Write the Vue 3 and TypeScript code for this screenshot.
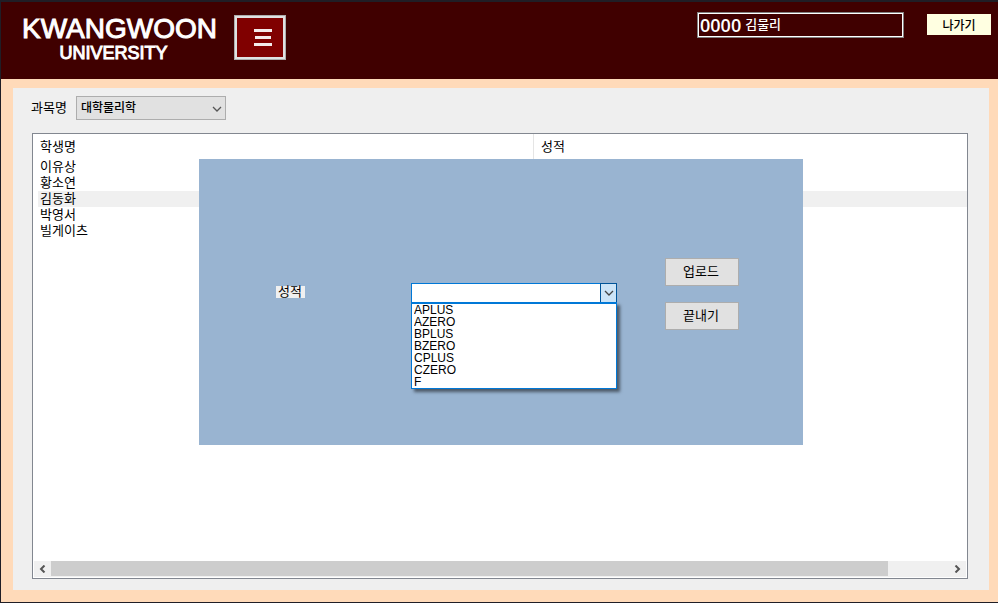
<script setup lang="ts">
import { ref } from 'vue'

interface Student {
  name: string
  score: string
}

const userId = '0000'
const userName = '김물리'

const subjects: string[] = ['대학물리학']
const subject = ref(subjects[0])

const students: Student[] = [
  { name: '이유상', score: '' },
  { name: '황소연', score: '' },
  { name: '김동화', score: '' },
  { name: '박영서', score: '' },
  { name: '빌게이츠', score: '' },
]
const selected = ref(2)

const grades: string[] = ['APLUS', 'AZERO', 'BPLUS', 'BZERO', 'CPLUS', 'CZERO', 'F']
const grade = ref('')
</script>

<template>
  <div class="window">
    <header class="header">
      <h1 class="brand">
        <span class="brand-name">KWANGWOON</span>
        <span class="brand-sub">UNIVERSITY</span>
      </h1>
      <button class="menu" type="button" aria-label="메뉴">
        <svg width="18" height="17" viewBox="0 0 18 17">
          <path d="M0 0h18v3H0zM1 7h16v3H1zM0 14h18v3H0z" fill="#f4eaea" />
        </svg>
      </button>
      <div class="user">
        <span class="user-id">{{ userId }}</span>
        <span class="user-name">{{ userName }}</span>
      </div>
      <button class="exit" type="button">나가기</button>
    </header>

    <main class="body">
      <section class="panel">
        <div class="toolbar">
          <label for="subject">과목명</label>
          <div class="subject">
            <select id="subject" v-model="subject">
              <option v-for="s in subjects" :key="s">{{ s }}</option>
            </select>
            <svg class="chevron" width="10" height="6" viewBox="0 0 10 6">
              <path d="M1 1l4 4l4 -4" fill="none" stroke="#555" stroke-width="1.3" />
            </svg>
          </div>
        </div>

        <div class="list">
          <table class="students">
            <thead>
              <tr>
                <th class="name-col">학생명</th>
                <th>성적</th>
              </tr>
            </thead>
            <tbody>
              <tr
                v-for="(student, i) in students"
                :key="student.name"
                :class="{ selected: i === selected }"
                @click="selected = i"
              >
                <td>{{ student.name }}</td>
                <td>{{ student.score }}</td>
              </tr>
            </tbody>
          </table>

          <div class="scrollbar">
            <button type="button" class="scroll-btn" aria-label="왼쪽">
              <svg width="7" height="8" viewBox="0 0 7 8">
                <path d="M5.5 .5L2 4l3.500 3.500" fill="none" stroke="#555" stroke-width="2" />
              </svg>
            </button>
            <div class="track"><div class="thumb"></div></div>
            <button type="button" class="scroll-btn" aria-label="오른쪽">
              <svg width="7" height="8" viewBox="0 0 7 8">
                <path d="M1.500 .5L5 4l-3.500 3.500" fill="none" stroke="#555" stroke-width="2" />
              </svg>
            </button>
          </div>

          <div class="dialog">
            <div class="label-cell">
              <label class="grade-label" for="grade">성적</label>
            </div>
            <div class="combo">
              <select id="grade" v-model="grade">
                <option value=""></option>
                <option v-for="g in grades" :key="g">{{ g }}</option>
              </select>
              <span class="combo-arrow">
                <svg width="10" height="6" viewBox="0 0 10 6">
                  <path d="M1 1l4 4l4 -4" fill="none" stroke="#444" stroke-width="1.3" />
                </svg>
              </span>
              <ul class="options" role="listbox">
                <li
                  v-for="g in grades"
                  :key="g"
                  role="option"
                  :aria-selected="g === grade"
                  @click="grade = g"
                >
                  {{ g }}
                </li>
              </ul>
            </div>
            <div class="actions">
              <button type="button">업로드</button>
              <button type="button">끝내기</button>
            </div>
          </div>
        </div>
      </section>
    </main>
  </div>
</template>

<style>
html,
body {
  margin: 0;
  background: #1e1e1e;
}
</style>

<style scoped>
.window {
  box-sizing: border-box;
  min-height: 100vh;
  display: flex;
  flex-direction: column;
  padding: 2px 0 1px 1px;
  background: #201e26;
  font-family: 'Liberation Sans', 'Noto Sans CJK KR', sans-serif;
  font-size: 13px;
  line-height: 16px;
  color: #000;
}

button,
select {
  font: inherit;
  color: inherit;
  margin: 0;
  border-radius: 0;
}

.header {
  display: flex;
  align-items: flex-start;
  height: 77px;
  padding: 0 7px 0 20px;
  background: #400000;
  color: #fff;
}

.brand {
  display: flex;
  flex-direction: column;
  align-items: center;
  width: 197px;
  margin: 13px 16px 0 0;
  font-weight: 400;
  text-align: center;
  -webkit-text-stroke: 1px #fff;
}

.brand-name {
  font-size: 28px;
  line-height: 28px;
}

.brand-sub {
  padding-right: 12px;
  font-size: 18px;
  line-height: 20px;
}

.menu {
  display: flex;
  align-items: center;
  justify-content: center;
  width: 52px;
  height: 45px;
  margin-top: 13px;
  padding: 0 0 0 6px;
  border: 1px solid #adadad;
  box-shadow: inset 0 0 0 2px #e1e1e1;
  background: #800000;
}

.user {
  display: flex;
  align-items: center;
  gap: 4px;
  box-sizing: border-box;
  width: 207px;
  height: 26px;
  margin: 10px 23px 0 auto;
  padding: 0 2px;
  border: 1px solid #808080;
  box-shadow: inset 0 0 0 1px #fff;
}

.user-id {
  font-family: 'Open Sans', sans-serif;
  font-size: 18px;
  font-weight: 600;
}

.user-name {
  font-weight: 500;
}

.exit {
  width: 64px;
  height: 21px;
  margin-top: 12px;
  padding: 2px 0 0;
  border: 0;
  background: #ffffe1;
  color: #000;
  font-size: 12px;
  font-weight: 500;
}

.body {
  flex: 1;
  display: flex;
  padding: 9px 9px 12px 12px;
  background: #ffdab9;
}

.panel {
  flex: 1;
  display: flex;
  flex-direction: column;
  gap: 13px;
  padding: 8px 21px 11px 18px;
  background: #efefef;
}

.toolbar {
  display: flex;
  align-items: center;
  gap: 9px;
}

.subject {
  position: relative;
  width: 150px;
  height: 24px;
}

.subject select {
  appearance: none;
  width: 100%;
  height: 100%;
  padding: 0 20px 0 4px;
  border: 1px solid #adadad;
  background: #e1e1e1;
  font-size: 12px;
  font-weight: 500;
}

.chevron {
  position: absolute;
  right: 4px;
  top: 10px;
  pointer-events: none;
}

.list {
  position: relative;
  flex: 1;
  display: flex;
  flex-direction: column;
  justify-content: space-between;
  margin-left: 1px;
  border: 1px solid #828790;
  background: #fff;
}

.students {
  width: 100%;
  table-layout: fixed;
  border-collapse: collapse;
}

.students th {
  height: 25px;
  padding: 0 0 0 7px;
  font-weight: 400;
  text-align: left;
}

.students .name-col {
  width: 493px;
  border-right: 1px solid #e5e5e5;
}

.students td {
  height: 16px;
  padding: 0 0 0 7px;
}

.students .selected {
  background: linear-gradient(to right, #fff 5px, #f0f0f0 5px);
}

.scrollbar {
  display: flex;
  margin: 0 1px 1px;
  background: #f0f0f0;
}

.scroll-btn {
  display: flex;
  align-items: center;
  justify-content: center;
  width: 17px;
  height: 16px;
  padding: 0;
  border: 0;
  background: transparent;
}

.track {
  flex: 1;
  padding-right: 61px;
}

.thumb {
  height: 15px;
  background: #cdcdcd;
}

.dialog {
  position: absolute;
  top: 25px;
  left: 166px;
  box-sizing: border-box;
  width: 604px;
  height: 286px;
  display: grid;
  grid-template-columns: 87px 206px 74px;
  column-gap: 48px;
  align-items: start;
  padding: 99px 0 0 77px;
  background: #99b4d1;
}

.label-cell {
  padding-top: 28px;
}

.grade-label {
  display: block;
  width: 27px;
  height: 12px;
  padding-left: 2px;
  background: #f0f0f0;
  line-height: 12px;
}

.combo {
  position: relative;
  margin-top: 25px;
  height: 20px;
}

.combo select {
  appearance: none;
  width: 100%;
  height: 20px;
  padding: 0 20px 0 3px;
  border: 1px solid #0078d7;
  background: #fff;
  font-size: 12px;
}

.combo-arrow {
  position: absolute;
  top: 0;
  right: 0;
  display: flex;
  align-items: center;
  justify-content: center;
  box-sizing: border-box;
  width: 17px;
  height: 20px;
  border: 1px solid #005499;
  background: #cce4f7;
  pointer-events: none;
}

.options {
  position: absolute;
  top: 19px;
  left: 0;
  right: 0;
  margin: 0;
  padding: 0 2px;
  border: 1px solid #0078d7;
  border-top-width: 2px;
  background: #fff;
  box-shadow: 3px 3px 3px rgba(0, 0, 0, 0.5);
  list-style: none;
  font-size: 12px;
  line-height: 12px;
}

.options li {
  height: 12px;
  overflow: hidden;
}

.actions {
  display: flex;
  flex-direction: column;
  gap: 16px;
}

.actions button {
  height: 28px;
  padding: 0 2px 0 0;
  border: 1px solid #adadad;
  background: #e1e1e1;
}
</style>
